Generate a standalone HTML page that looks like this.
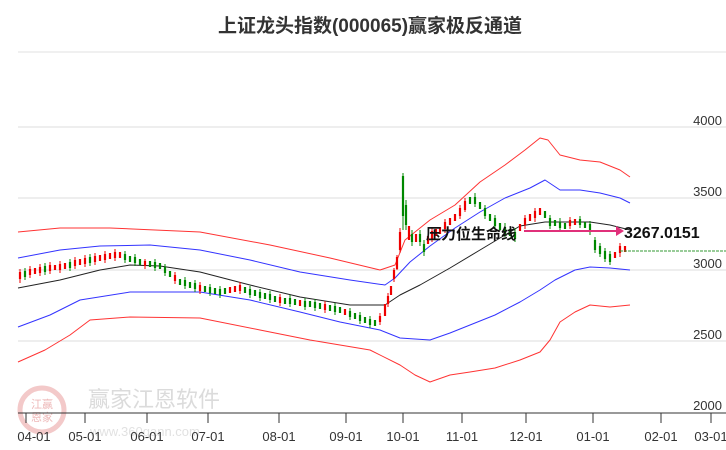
<!DOCTYPE html>
<html><head><meta charset="utf-8"><style>
body{margin:0;background:#fff;width:726px;height:450px;overflow:hidden;font-family:"Liberation Sans","Noto Sans CJK SC",sans-serif}
</style></head><body>
<svg width="726" height="450" xmlns="http://www.w3.org/2000/svg" style="position:absolute;left:0;top:0">
<text x="370" y="32" text-anchor="middle" font-size="19" font-weight="bold" fill="#333" font-family="Liberation Sans,Noto Sans CJK SC,sans-serif">上证龙头指数(000065)赢家极反通道</text>
<line x1="18" y1="52" x2="726" y2="52" stroke="#e0e0e0" stroke-width="1"/>
<g stroke="#ddd" stroke-width="1">
<line x1="18" y1="127" x2="726" y2="127"/><line x1="18" y1="198" x2="726" y2="198"/><line x1="18" y1="270" x2="726" y2="270"/><line x1="18" y1="341" x2="726" y2="341"/>
</g>
<g font-size="13" fill="#333" text-anchor="end" font-family="Liberation Sans,sans-serif">
<text x="722" y="125">4000</text><text x="722" y="196">3500</text><text x="722" y="268">3000</text><text x="722" y="339">2500</text><text x="722" y="410">2000</text>
</g>
<g opacity="0.35">
<circle cx="42" cy="410" r="22" fill="none" stroke="#d66" stroke-width="5"/>
<text x="42" y="408" font-size="11" fill="#c33" text-anchor="middle">江赢</text>
<text x="42" y="421" font-size="11" fill="#c33" text-anchor="middle">恩家</text>
<text x="88" y="407" font-size="22" fill="#999">赢家江恩软件</text>
<text x="90" y="436" font-size="13" fill="#aaa">www.360gann.com</text>
</g>
<line x1="18" y1="413" x2="726" y2="413" stroke="#333" stroke-width="1"/>
<g stroke="#333" stroke-width="1">
<line x1="26" y1="413" x2="26" y2="423"/><line x1="85" y1="413" x2="85" y2="423"/><line x1="147" y1="413" x2="147" y2="423"/><line x1="208" y1="413" x2="208" y2="423"/><line x1="279" y1="413" x2="279" y2="423"/><line x1="346" y1="413" x2="346" y2="423"/><line x1="403" y1="413" x2="403" y2="423"/><line x1="462" y1="413" x2="462" y2="423"/><line x1="526" y1="413" x2="526" y2="423"/><line x1="593" y1="413" x2="593" y2="423"/><line x1="661" y1="413" x2="661" y2="423"/><line x1="711" y1="413" x2="711" y2="423"/>
</g>
<g font-size="13" fill="#333" text-anchor="middle" font-family="Liberation Sans,sans-serif">
<text x="34" y="441">04-01</text><text x="85" y="441">05-01</text><text x="147" y="441">06-01</text><text x="208" y="441">07-01</text><text x="279" y="441">08-01</text><text x="346" y="441">09-01</text><text x="403" y="441">10-01</text><text x="462" y="441">11-01</text><text x="526" y="441">12-01</text><text x="593" y="441">01-01</text><text x="661" y="441">02-01</text><text x="711" y="441">03-01</text>
</g>
<g fill="none" stroke-width="1" stroke-linejoin="round">
<polyline stroke="#f33" points="18,232 60,228 110,228 200,232 270,245 330,258 380,270 395,265 405,240 430,220 455,205 480,182 505,165 525,150 540,138 548,140 560,155 580,160 600,162 620,170 630,177"/>
<polyline stroke="#33f" points="18,258 60,250 100,246 150,245 200,250 250,260 300,272 350,280 385,285 395,278 410,262 430,246 455,228 480,212 505,198 530,188 545,180 560,190 580,190 600,193 620,198 630,203"/>
<polyline stroke="#222" points="18,288 60,280 100,270 130,265 160,266 200,272 250,285 300,297 350,305 385,305 400,295 420,285 450,268 480,250 505,235 520,226 545,222 570,222 590,222 610,225 630,230"/>
<polyline stroke="#33f" points="18,327 50,315 80,300 130,292 200,292 250,300 300,312 340,322 380,330 400,338 430,340 450,333 470,325 495,315 520,302 540,290 555,280 575,270 590,267 610,268 630,270"/>
<polyline stroke="#f33" points="18,362 45,350 70,335 90,320 130,317 200,318 260,330 310,340 370,350 400,365 415,375 430,382 450,375 470,372 495,368 520,360 540,352 550,340 560,322 575,312 590,305 610,307 630,305"/>
</g>
<!-- wicks -->
<path stroke="#e00" stroke-width="1" fill="none" d="M20,269v14M30,266v12M40,264v12M50,262v12M60,261v12M75,257v12M85,255v12M95,253v12M105,251v12M115,249v12M145,259v10M175,272v12M200,282v12M240,282v12M280,294v12M325,301v12M380,313v12M388,293v14M394,268v14M397,255v15M400,228v25M432,228v14M445,219v14M460,205v14M465,198v14M525,215v14M535,208v14M570,217v12M620,243v14"/>
<path stroke="#080" stroke-width="1" fill="none" d="M25,268v12M45,263v12M70,259v12M90,254v12M125,251v12M135,254v12M155,259v12M165,264v12M185,277v12M195,280v12M210,284v12M220,286v12M250,286v12M260,289v12M270,291v12M290,295v12M305,298v12M315,299v12M335,303v12M350,308v12M360,312v12M370,316v12M403,173v57M406,200v30M412,230v16M420,230v16M424,240v16M475,193v14M485,205v14M495,215v14M505,223v14M515,228v14M550,215v14M560,218v14M580,216v12M590,221v14M595,237v16M600,243v14M605,248v14M610,251v14"/>
<!-- bodies red -->
<path stroke="#e00" stroke-width="2.2" fill="none" d="M20,272v7M30,269v6M35,268v6M40,267v6M50,265v6M55,265v5M60,264v6M65,263v6M75,260v6M80,259v6M85,258v6M95,256v6M100,255v6M105,254v6M110,253v6M115,252v6M120,252v6M145,261v5M175,275v6M200,285v6M230,287v6M235,286v6M240,285v6M280,297v6M300,300v6M325,304v6M345,309v6M380,316v6M385,304v12M388,296v8M391,286v9M394,270v9M397,257v12M400,232v18M409,226v14M416,234v8M428,236v8M432,231v8M436,229v7M440,227v7M445,222v7M450,218v7M455,214v7M460,208v8M465,201v9M520,224v7M525,218v7M530,214v7M535,211v7M540,208v7M570,220v6M575,219v6M615,252v6M620,246v7M625,246v6"/>
<!-- bodies green -->
<path stroke="#080" stroke-width="2.2" fill="none" d="M25,271v6M45,266v6M70,262v6M90,257v6M125,254v6M130,256v6M135,257v6M140,259v6M150,261v6M155,262v6M160,263v6M165,267v6M170,271v6M180,279v6M185,280v6M190,282v6M195,283v6M205,286v6M210,287v6M215,288v6M220,289v6M225,288v6M245,287v6M250,289v6M255,290v6M260,292v6M265,293v6M270,294v6M275,296v6M285,298v6M290,298v6M295,299v6M305,301v6M310,301v6M315,302v6M320,303v6M330,305v6M335,306v6M340,307v6M350,311v6M355,313v6M360,315v6M365,317v6M370,319v6M375,320v6M403,176v40M406,205v20M412,234v8M420,234v8M424,244v8M470,197v7M475,197v7M480,202v7M485,208v8M490,214v7M495,218v8M500,223v7M505,227v7M510,229v7M515,232v7M545,211v7M550,218v8M555,220v6M560,222v6M565,223v6M580,219v6M585,222v6M590,224v8M595,240v10M600,246v8M605,251v8M610,254v8"/>
<line x1="620" y1="251" x2="726" y2="251" stroke="#393" stroke-width="1" stroke-dasharray="3,1"/>
<line x1="524" y1="231" x2="616" y2="231" stroke="#e0307a" stroke-width="2"/>
<polygon points="616,226 624,231 616,236" fill="#e0307a"/>
<text x="426" y="239" font-size="15" font-weight="bold" fill="#111">压力位生命线</text>
<text x="624" y="238" font-size="16" font-weight="bold" fill="#111" font-family="Liberation Sans,sans-serif">3267.0151</text>
</svg>
</body></html>
